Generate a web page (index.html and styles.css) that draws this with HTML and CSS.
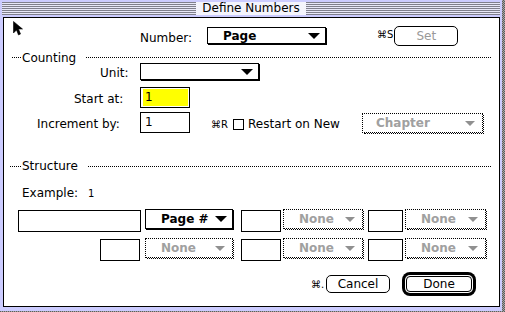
FILE: index.html
```html
<!DOCTYPE html>
<html lang="en">
<head>
  <meta charset="UTF-8">
  <title>Define Numbers</title>
  <link rel="stylesheet" href="styles.css">
</head>
<body>
  <div class="window">
    <div class="titlebar">
      <div class="stripes"><span class="title">Define Numbers</span></div>
    </div>
    <div class="content">
      <div class="row row-number">
        <span class="label lbl-number">Number:</span>
        <div class="popup popup-number"><span class="popup-text">Page</span><span class="tri"></span></div>
        <span class="cmd cmd-set">⌘S</span>
        <div class="btn btn-set">Set</div>
      </div>

      <div class="group-head head-counting">
        <span class="lead"></span><span class="group-title">Counting</span><span class="rule"></span>
      </div>

      <div class="row row-unit">
        <span class="label lbl-unit">Unit:</span>
        <div class="popup popup-unit"><span class="popup-text"></span><span class="tri"></span></div>
      </div>

      <div class="row row-start">
        <span class="label lbl-start">Start at:</span>
        <div class="field field-num"><span class="sel">1</span></div>
      </div>

      <div class="row row-incr">
        <span class="label lbl-incr">Increment by:</span>
        <div class="field field-num"><span class="plain">1</span></div>
        <span class="cmd cmd-restart">⌘R</span>
        <span class="checkbox"></span>
        <span class="label lbl-restart">Restart on New</span>
        <div class="popup dim popup-chapter"><span class="popup-text">Chapter</span><span class="tri"></span></div>
      </div>

      <div class="group-head head-structure">
        <span class="lead"></span><span class="group-title">Structure</span><span class="rule"></span>
      </div>

      <div class="row row-example">
        <span class="label">Example:</span><span class="example-value">1</span>
      </div>

      <div class="row row-struct row-struct-1">
        <div class="field f-wide"></div>
        <div class="popup p-mid"><span class="popup-text">Page #</span><span class="tri"></span></div>
        <div class="field f-40"></div>
        <div class="popup dim p-none"><span class="popup-text">None</span><span class="tri"></span></div>
        <div class="field f-35"></div>
        <div class="popup dim p-none p-last"><span class="popup-text">None</span><span class="tri"></span></div>
      </div>

      <div class="row row-struct row-struct-2">
        <div class="field f-40 f-first"></div>
        <div class="popup dim p-mid"><span class="popup-text">None</span><span class="tri"></span></div>
        <div class="field f-40"></div>
        <div class="popup dim p-none"><span class="popup-text">None</span><span class="tri"></span></div>
        <div class="field f-35"></div>
        <div class="popup dim p-none p-last"><span class="popup-text">None</span><span class="tri"></span></div>
      </div>

      <div class="row row-buttons">
        <span class="cmd cmd-cancel">⌘.</span>
        <div class="btn btn-cancel">Cancel</div>
        <div class="btn btn-done">Done</div>
      </div>
    </div>

    <!-- mouse pointer over the dialog -->
    <svg class="cursor" width="10" height="15" viewBox="0 0 10 15">
      <polygon points="0.5,0.5 0.5,12 3.5,9 5.5,14 7.5,13 5.5,8 9.5,8" fill="#000" stroke="#000" stroke-width="0.6"/>
    </svg>
  </div>
</body>
</html>
```

FILE: styles.css
```css
* {
  box-sizing: border-box;
}

body {
  margin: 0;
  width: 505px;
  height: 312px;
  overflow: hidden;
  background: repeating-conic-gradient(#5c5c5c 0 25%, #a6a6a6 0 50%) 0 0 / 2px 2px;
  font-family: "DejaVu Sans", sans-serif;
  font-size: 12px;
  color: #000;
}

.window {
  position: relative;
  width: 502px;
  height: 311px;
  background: #ccccff;
  display: flex;
  flex-direction: column;
}

/* title bar */
.titlebar {
  height: 17px;
  padding: 2px 2px 2px 2px;
}

.stripes {
  height: 13px;
  background: repeating-linear-gradient(to bottom, #80808c 0 1px, #e8e8f8 1px 2px);
  display: flex;
  justify-content: center;
}

.title {
  background: #f4f4fc;
  padding: 0 6px;
  line-height: 13px;
}

/* dialog body */
.content {
  flex: 1;
  margin: 0 2px 4px 3px;
  border: 1px solid #000;
  background: #fff;
  padding-top: 8px;
  display: flex;
  flex-direction: column;
}

.row {
  display: flex;
  align-items: flex-start;
  flex-shrink: 0;
}

.label {
  line-height: 14px;
  white-space: nowrap;
}

.cmd {
  font-size: 10px;
  line-height: 12px;
  white-space: nowrap;
}

/* popups */
.popup {
  position: relative;
  border: 1px solid #000;
  box-shadow: 1px 1px 0 #000;
  background: #fff;
  display: flex;
  align-items: center;
  padding-left: 15px;
  padding-right: 5px;
}

.popup-text {
  flex: 1;
  font-weight: bold;
  line-height: 14px;
}

.tri {
  width: 0;
  height: 0;
  border-left: 6px solid transparent;
  border-right: 6px solid transparent;
  border-top: 6px solid #000;
}

.popup.dim {
  border: 1px dotted #000;
  box-shadow: none;
}

.popup.dim::after {
  content: "";
  position: absolute;
  left: 1px;
  top: 1px;
  right: -2px;
  bottom: -2px;
  border-right: 1px dotted #000;
  border-bottom: 1px dotted #000;
}

.popup.dim .popup-text {
  color: #a0a0a0;
}

.popup.dim .tri {
  border-left-width: 5px;
  border-right-width: 5px;
  border-top: 5px solid #909090;
  margin-right: 2px;
}

/* text fields */
.field {
  border: 1px solid #000;
  background: #fff;
}

.field-num {
  width: 50px;
  height: 21px;
  padding: 1px 1px 1px 2px;
}

.sel,
.plain {
  display: block;
  height: 100%;
  line-height: 17px;
  padding-left: 2px;
}

.sel {
  background: #ffff00;
}

.checkbox {
  width: 11px;
  height: 11px;
  border: 1px solid #000;
}

/* buttons */
.btn {
  border: 1px solid #000;
  border-radius: 5px;
  text-align: center;
  background: #fff;
}

/* row: Number */
.row-number {
  height: 20px;
}

.lbl-number {
  margin: 5px 0 0 136px;
  width: 67px;
}

.popup-number {
  margin-top: 1px;
  width: 119px;
  height: 17px;
}

.cmd-set {
  margin: 3px 1px 0 51px;
}

.btn-set {
  width: 64px;
  height: 20px;
  line-height: 18px;
  color: #999;
}

/* group headings */
.group-head {
  display: flex;
  align-items: flex-start;
  height: 12px;
  flex-shrink: 0;
  margin-right: 8px;
}

.lead {
  margin: 6px 0 0 8px;
  width: 9px;
  border-top: 1px dotted #000;
}

.group-title {
  margin-left: 1px;
  padding-right: 10px;
  line-height: 14px;
}

.rule {
  flex: 1;
  margin-top: 6px;
  border-top: 1px dotted #000;
}

.head-counting {
  margin-top: 5px;
}

.head-structure {
  margin-top: 26px;
}

.head-structure .rule,
.head-structure .lead {
  margin-top: 7px;
}

.head-structure .lead {
  margin-left: 6px;
  width: 11px;
}

/* row: Unit */
.row-unit {
  height: 19px;
}

.lbl-unit {
  margin: 3px 0 0 96px;
  width: 40px;
}

.popup-unit {
  width: 119px;
  height: 17px;
}

/* row: Start at */
.row-start {
  height: 21px;
  margin-top: 5px;
}

.lbl-start {
  margin: 5px 0 0 70px;
  width: 66px;
}

/* row: Increment */
.row-incr {
  height: 21px;
  margin-top: 4px;
}

.lbl-incr {
  margin: 5px 0 0 33px;
  width: 103px;
}

.cmd-restart {
  margin: 7px 0 0 21px;
  width: 22px;
}

.row-incr .checkbox {
  margin-top: 7px;
}

.lbl-restart {
  margin: 5px 0 0 4px;
  width: 114px;
}

.popup-chapter {
  margin-top: 1px;
  width: 121px;
  height: 20px;
  padding-left: 13px;
}

/* Example */
.row-example {
  height: 14px;
  margin-top: 15px;
  padding-left: 18px;
}

.example-value {
  margin-left: 10px;
  font-size: 10px;
  line-height: 16px;
}

/* structure rows */
.row-struct {
  height: 23px;
}

.row-struct-1 {
  margin-top: 9px;
}

.row-struct-2 {
  margin-top: 6px;
}

.row-struct .field {
  margin-top: 1px;
  height: 22px;
}

.row-struct .popup {
  height: 20px;
}

.f-wide {
  width: 123px;
  margin-left: 14px;
}

.p-mid {
  width: 88px;
  margin-left: 4px;
}

.row-struct-2 .p-mid {
  margin-left: 5px;
}

.f-40 {
  width: 40px;
  margin-left: 8px;
}

.f-first.f-40 {
  margin-left: 96px;
}

.p-none {
  width: 80px;
  margin-left: 2px;
}

.f-35 {
  width: 35px;
  margin-left: 5px;
}

.p-last {
  width: 81px;
  margin-left: 2px;
}

/* bottom buttons */
.row-buttons {
  height: 18px;
  margin-top: 14px;
  align-items: center;
}

.cmd-cancel {
  margin-left: 307px;
  width: 15px;
  padding-top: 2px;
}

.btn-cancel {
  width: 64px;
  height: 18px;
  line-height: 16px;
}

.btn-done {
  margin-left: 16px;
  width: 66px;
  height: 16px;
  line-height: 14px;
  box-shadow: 0 0 0 1px #fff, 0 0 0 4px #000;
  border-radius: 4px;
}

.cursor {
  position: absolute;
  left: 13px;
  top: 21px;
}
```
